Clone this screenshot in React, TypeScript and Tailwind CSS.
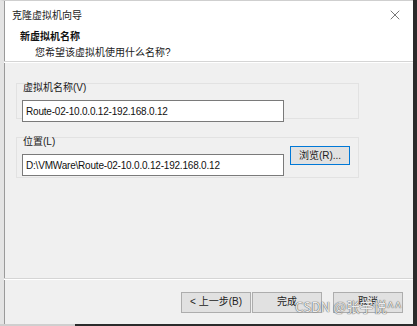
import { X } from "lucide-react";

const FONT = "font-['Liberation_Sans','Noto_Sans_CJK_SC',sans-serif]";

function Field({ label, value }: { label: string; value: string }) {
  return (
    <div className="flex flex-col">
      <span className="text-[10px] leading-[14px] text-[#1a1a1a] pl-[6px] -mt-[3px]">{label}</span>
      <div className="mt-[5px] ml-[5px] w-[262px] h-[22px] bg-white border border-[#7a7a7a] flex items-center px-[3px] text-[10px] tracking-[-0.2px] text-[#111]">
        {value}
      </div>
    </div>
  );
}

export default function App() {
  return (
    <div className={`w-[417px] h-[326px] bg-[#2b2b2b] flex flex-col ${FONT}`}>
      <div className="w-[413px] h-[324px] bg-[#f0f0f0] border-l-[4px] border-l-[#e4e4e4] border-t border-t-[#cfcfcf] flex flex-col relative">
        {/* title bar + header */}
        <div className="bg-white border-l border-[#9a9a9a] flex flex-col">
          <div className="h-[28px] flex items-center justify-between pl-[7px] pr-[10px]">
            <span className="text-[10px] text-[#222]">克隆虚拟机向导</span>
            <X size={16} strokeWidth={1.2} className="text-[#555]" />
          </div>
          <div className="h-[32px] pl-[15px] flex flex-col">
            <span className="text-[10px] leading-[16px] font-bold text-[#111]">新虚拟机名称</span>
            <span className="text-[10px] leading-[16px] text-[#222] pl-[15px]">您希望该虚拟机使用什么名称?</span>
          </div>
        </div>
        <div className="h-[2px] border-t border-[#d5d5d5] border-b border-b-white" />

        {/* body */}
        <div className="flex-1 border-l border-[#9a9a9a] pl-[11px] pt-[20px] flex flex-col gap-[18px]">
          <div className="w-[343px] h-[36px] border border-[#e2e2e2]">
            <Field label="虚拟机名称(V)" value="Route-02-10.0.0.12-192.168.0.12" />
          </div>
          <div className="w-[343px] h-[41px] border border-[#e2e2e2] flex items-start">
            <Field label="位置(L)" value={"D:\\VMWare\\Route-02-10.0.0.12-192.168.0.12"} />
            <button className="mt-[8px] ml-[6px] w-[60px] h-[19px] bg-[#e1e1e1] border border-[#0078d7] text-[10px] text-[#222] leading-none">
              浏览(R)...
            </button>
          </div>
        </div>

        {/* footer */}
        <div className="h-[2px] border-t border-[#d5d5d5] border-b border-b-white" />
        <div className="h-[44px] border-l border-[#9a9a9a] flex items-center justify-end pr-[10px] gap-[1px]">
          <button className="w-[70px] h-[21px] bg-[#e1e1e1] border border-[#adadad] text-[10px] text-[#222] leading-none">
            &lt; 上一步(B)
          </button>
          <button className="w-[70px] h-[21px] bg-[#e1e1e1] border border-[#adadad] text-[10px] text-[#222] leading-none">
            完成
          </button>
          <button className="ml-[10px] w-[70px] h-[21px] bg-[#e1e1e1] border border-[#adadad] text-[10px] text-[#222] leading-none">
            取消
          </button>
        </div>

        {/* watermark */}
        <span className="absolute left-[291px] top-[295px] text-[13.5px] text-[#ececec] [text-shadow:0_0_1px_#555,0_0_1px_#555] font-['Noto_Sans_CJK_SC',sans-serif]">
          CSDN @张宇悦^^
        </span>
      </div>
      <div className="h-[2px] w-[75px] bg-[#cfcfcf]" />
    </div>
  );
}
